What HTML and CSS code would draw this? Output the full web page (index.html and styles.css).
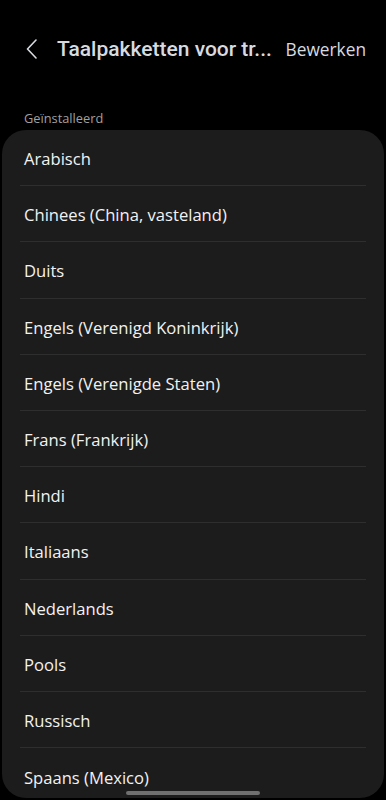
FILE: index.html
```html
<!DOCTYPE html>
<html lang="nl">
<head>
<meta charset="utf-8">
<link rel="stylesheet" href="styles.css">
</head>
<body>
<div class="screen">
  <header class="appbar">
    <span class="back" aria-label="Terug">
      <svg width="12" height="20" viewBox="0 0 12 20"><path d="M10 1 L1.5 10 L10 19" fill="none" stroke="#d6dbe0" stroke-width="1.6" stroke-linecap="round" stroke-linejoin="round"/></svg>
    </span>
    <h1 class="title">Taalpakketten voor tr...</h1>
    <span class="action">Bewerken</span>
  </header>
  <div class="section-label">Geïnstalleerd</div>
  <ul class="card">
    <li class="row">Arabisch</li>
    <li class="row">Chinees (China, vasteland)</li>
    <li class="row">Duits</li>
    <li class="row">Engels (Verenigd Koninkrijk)</li>
    <li class="row">Engels (Verenigde Staten)</li>
    <li class="row">Frans (Frankrijk)</li>
    <li class="row">Hindi</li>
    <li class="row">Italiaans</li>
    <li class="row">Nederlands</li>
    <li class="row">Pools</li>
    <li class="row">Russisch</li>
    <li class="row">Spaans (Mexico)</li>
  </ul>
  <div class="home-indicator"></div>
</div>
</body>
</html>
```
FILE: styles.css
```css
html, body {
  margin: 0;
  padding: 0;
  background: #000;
}
body {
  font-family: "Open Sans", "Noto Sans", sans-serif;
  -webkit-font-smoothing: antialiased;
}
.screen {
  width: 386px;
  height: 800px;
  overflow: hidden;
  position: relative;
  background: #000;
}
.appbar {
  display: flex;
  align-items: center;
  height: 56px;
  padding: 21px 0 0 0;
  box-sizing: content-box;
}
.back {
  display: flex;
  width: 12px;
  margin-left: 26px;
}
.title {
  margin: 0 0 0 19px;
  font-family: "Roboto", "Open Sans", sans-serif;
  font-size: 21px;
  font-weight: 500;
  color: #d6dbe0;
  white-space: nowrap;
}
.action {
  margin-left: auto;
  margin-right: 20px;
  font-size: 17.3px;
  font-weight: 400;
  color: #d6dbe0;
}
.section-label {
  font-size: 12.8px;
  color: #a0a0a0;
  padding: 32px 0 0 24px;
  height: 21px;
}
.card {
  list-style: none;
  margin: 0 2px;
  padding: 0;
  background: #1c1c1c;
  border-radius: 24px;
  height: 668px;
  overflow: hidden;
}
.row {
  height: 56.2px;
  box-sizing: border-box;
  display: flex;
  align-items: center;
  margin: 0 18px;
  padding: 2px 0 0 4px;
  font-size: 16.6px;
  color: #f2f2f2;
  border-bottom: 1px solid #2e2e2e;
}
.row:last-child {
  border-bottom: none;
}
.home-indicator {
  position: absolute;
  left: 126px;
  width: 134px;
  top: 791px;
  height: 4px;
  border-radius: 2px;
  background: #707070;
}
```
